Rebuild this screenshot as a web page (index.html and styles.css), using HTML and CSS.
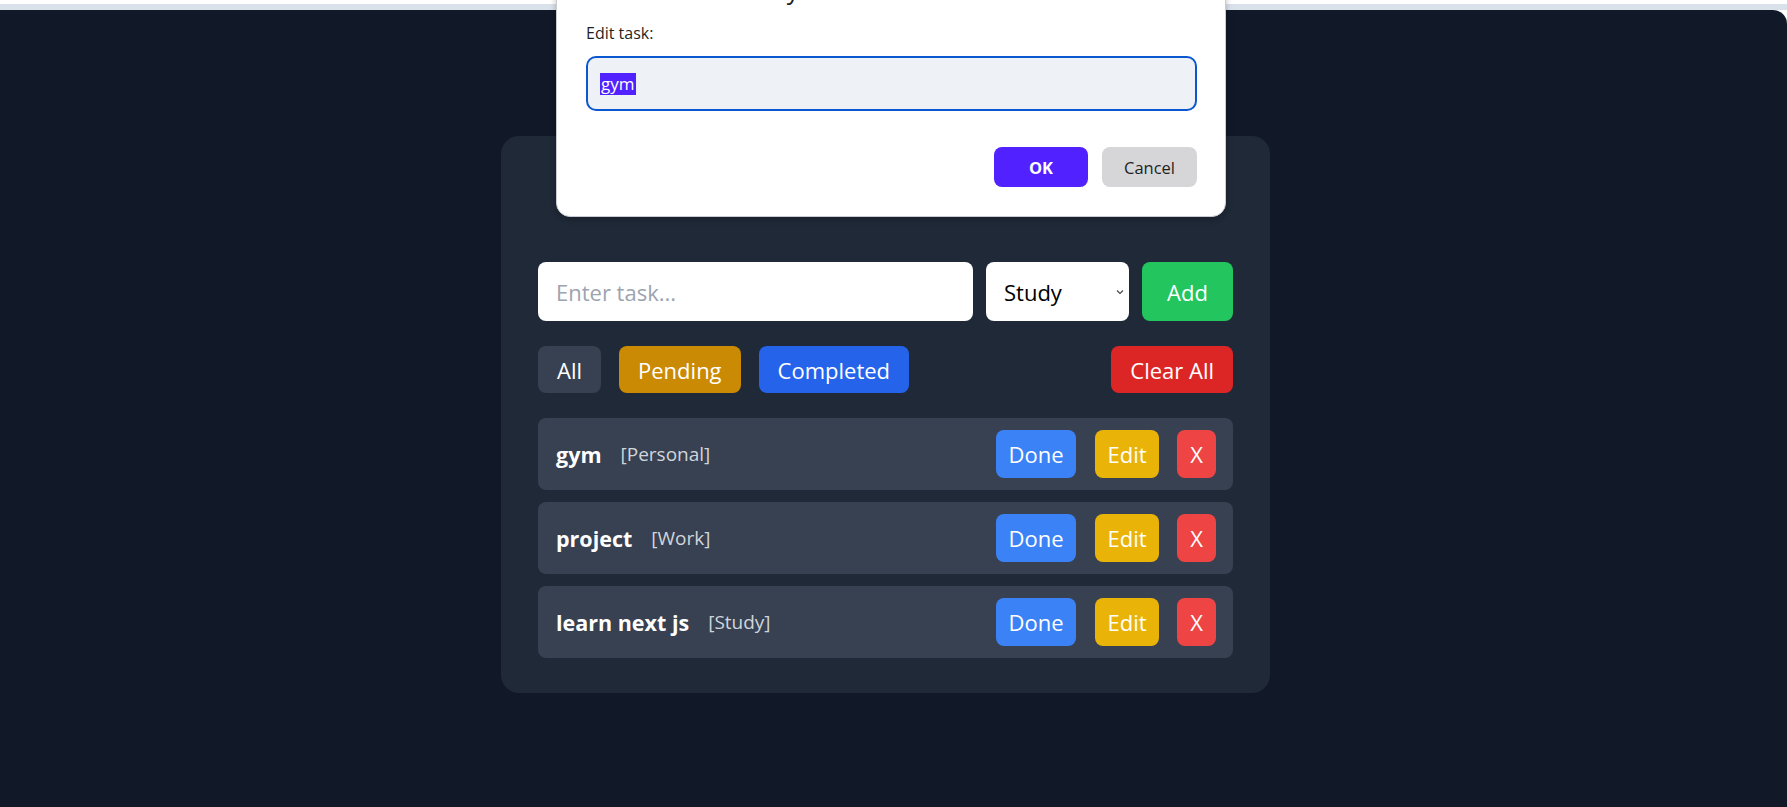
FILE: index.html
```html
<!DOCTYPE html>
<html lang="en">
<head>
<meta charset="utf-8">
<title>Todo App</title>
<link rel="stylesheet" href="styles.css">
</head>
<body>
<div class="topbar"></div>
<main class="page">
  <section class="card">
    <h1 class="title">Todo App</h1>
    <div class="add-row">
      <input class="task-input" type="text" placeholder="Enter task...">
      <div class="select-wrap">
        <select class="cat-select">
          <option>Study</option>
          <option>Work</option>
          <option>Personal</option>
        </select>
        <svg class="chev" width="8" height="6" viewBox="0 0 8 6"><path d="M1 1.5 L4 4.5 L7 1.5" fill="none" stroke="#444" stroke-width="1.1"/></svg>
      </div>
      <button class="btn btn-add">Add</button>
    </div>
    <div class="filter-row">
      <button class="btn fbtn f-all">All</button>
      <button class="btn fbtn f-pending">Pending</button>
      <button class="btn fbtn f-completed">Completed</button>
      <button class="btn fbtn f-clear">Clear All</button>
    </div>
    <ul class="tasks">
      <li class="task">
        <span class="task-name">gym</span>
        <span class="task-cat">[Personal]</span>
        <div class="task-actions">
          <button class="btn tbtn t-done">Done</button>
          <button class="btn tbtn t-edit">Edit</button>
          <button class="btn tbtn t-del">X</button>
        </div>
      </li>
      <li class="task">
        <span class="task-name">project</span>
        <span class="task-cat">[Work]</span>
        <div class="task-actions">
          <button class="btn tbtn t-done">Done</button>
          <button class="btn tbtn t-edit">Edit</button>
          <button class="btn tbtn t-del">X</button>
        </div>
      </li>
      <li class="task">
        <span class="task-name">learn next js</span>
        <span class="task-cat">[Study]</span>
        <div class="task-actions">
          <button class="btn tbtn t-done">Done</button>
          <button class="btn tbtn t-edit">Edit</button>
          <button class="btn tbtn t-del">X</button>
        </div>
      </li>
    </ul>
  </section>
</main>
<div class="dialog" role="dialog">
  <div class="dlg-title">localhost:3000 says</div>
  <div class="dlg-label">Edit task:</div>
  <div class="dlg-input"><span class="dlg-sel">gym</span></div>
  <div class="dlg-actions">
    <button class="dbtn dbtn-ok">OK</button>
    <button class="dbtn dbtn-cancel">Cancel</button>
  </div>
</div>
</body>
</html>
```

FILE: styles.css
```css
* { box-sizing: border-box; }
html, body { margin: 0; padding: 0; }
body {
  background: #ffffff;
  font-family: "Open Sans", "Noto Sans", "Liberation Sans", sans-serif;
  height: 807px;
  overflow: hidden;
  position: relative;
}
.topbar {
  height: 10px;
  border-top: 4px solid #ffffff;
  background: #d9e1ea;
}
.page {
  height: 797px;
  background: #111827;
  border-top-right-radius: 14px;
  display: flex;
  justify-content: center;
  align-items: flex-start;
  padding: 126px 16px 0 0;
}
.card {
  width: 769px;
  background: #1f2937;
  border-radius: 18px;
  padding: 37px 37px 35px;
}
.title {
  margin: 0 0 49px;
  height: 40px;
  line-height: 40px;
  font-size: 30px;
  text-align: center;
  color: #ffffff;
}
.add-row {
  display: flex;
  gap: 13px;
  height: 59px;
}
.task-input {
  flex: 1;
  height: 59px;
  border: none;
  border-radius: 8px;
  background: #ffffff;
  padding: 0 18px;
  font-family: inherit;
  font-size: 22px;
  color: #111827;
  outline: none;
}
.task-input::placeholder { color: #9ca3af; }
.select-wrap {
  position: relative;
  width: 143px;
}
.cat-select {
  -webkit-appearance: none;
  appearance: none;
  width: 100%;
  height: 59px;
  border: none;
  border-radius: 8px;
  background: #ffffff;
  padding: 0 18px;
  font-family: inherit;
  font-size: 22px;
  color: #000000;
  outline: none;
}
.chev {
  position: absolute;
  right: 5px;
  top: 27px;
  pointer-events: none;
}
.btn {
  border: none;
  color: #ffffff;
  font-family: inherit;
  font-size: 22px;
  border-radius: 8px;
  cursor: pointer;
  padding: 0;
}
.btn-add {
  width: 91px;
  height: 59px;
  background: #22c55e;
}
.filter-row {
  display: flex;
  gap: 18px;
  margin-top: 25px;
  height: 47px;
}
.fbtn {
  height: 47px;
  padding: 0 19px;
}
.f-all { background: #374151; }
.f-pending { background: #ca8a04; }
.f-completed { background: #2563eb; }
.f-clear { background: #dc2626; margin-left: auto; }
.tasks {
  list-style: none;
  margin: 25px 0 0;
  padding: 0;
  display: flex;
  flex-direction: column;
  gap: 12px;
}
.task {
  height: 72px;
  background: #374151;
  border-radius: 8px;
  display: flex;
  align-items: center;
  padding: 0 17px 0 18px;
}
.task-name {
  color: #ffffff;
  font-weight: 700;
  font-size: 21.5px;
}
.task-cat {
  color: #d1d5db;
  font-size: 19px;
  margin-left: 19px;
}
.task-actions {
  margin-left: auto;
  display: flex;
  gap: 19px;
}
.tbtn { height: 48px; }
.t-done { width: 80px; background: #3b82f6; }
.t-edit { width: 64px; background: #eab308; }
.t-del { width: 39px; background: #ef4444; margin-left: -1px; }

/* browser prompt dialog */
.dialog {
  position: absolute;
  top: -36px;
  left: 556px;
  width: 670px;
  height: 253px;
  background: #ffffff;
  border: 1px solid #c9cdd2;
  border-radius: 14px;
  box-shadow: 0 2px 6px rgba(0, 0, 0, 0.25);
  padding: 20px 28px 30px 29px;
  font-family: "Open Sans", "Noto Sans", "Liberation Sans", sans-serif;
  color: #1f1f1f;
}
.dlg-title {
  height: 20px;
  line-height: 20px;
  font-size: 25px;
  margin-top: -6px;
}
.dlg-label {
  margin-top: 24px;
  height: 20px;
  line-height: 20px;
  font-size: 16px;
}
.dlg-input {
  margin-top: 13px;
  height: 55px;
  border: 2px solid #0b57d0;
  border-radius: 10px;
  background: #eef1f6;
  display: flex;
  align-items: center;
  padding-left: 12px;
}
.dlg-sel {
  background: #5221ff;
  color: #ffffff;
  font-size: 17px;
  line-height: 22px;
  padding: 0 1px;
}
.dlg-actions {
  margin-top: 36px;
  display: flex;
  justify-content: flex-end;
  gap: 14px;
}
.dbtn {
  height: 40px;
  border: none;
  border-radius: 8px;
  font-family: inherit;
  font-size: 16.5px;
  padding: 0;
}
.dbtn-ok {
  width: 94px;
  background: #5121ff;
  color: #ffffff;
  font-weight: 700;
}
.dbtn-cancel {
  width: 95px;
  background: #d6d6d8;
  color: #1f1f1f;
}
```
